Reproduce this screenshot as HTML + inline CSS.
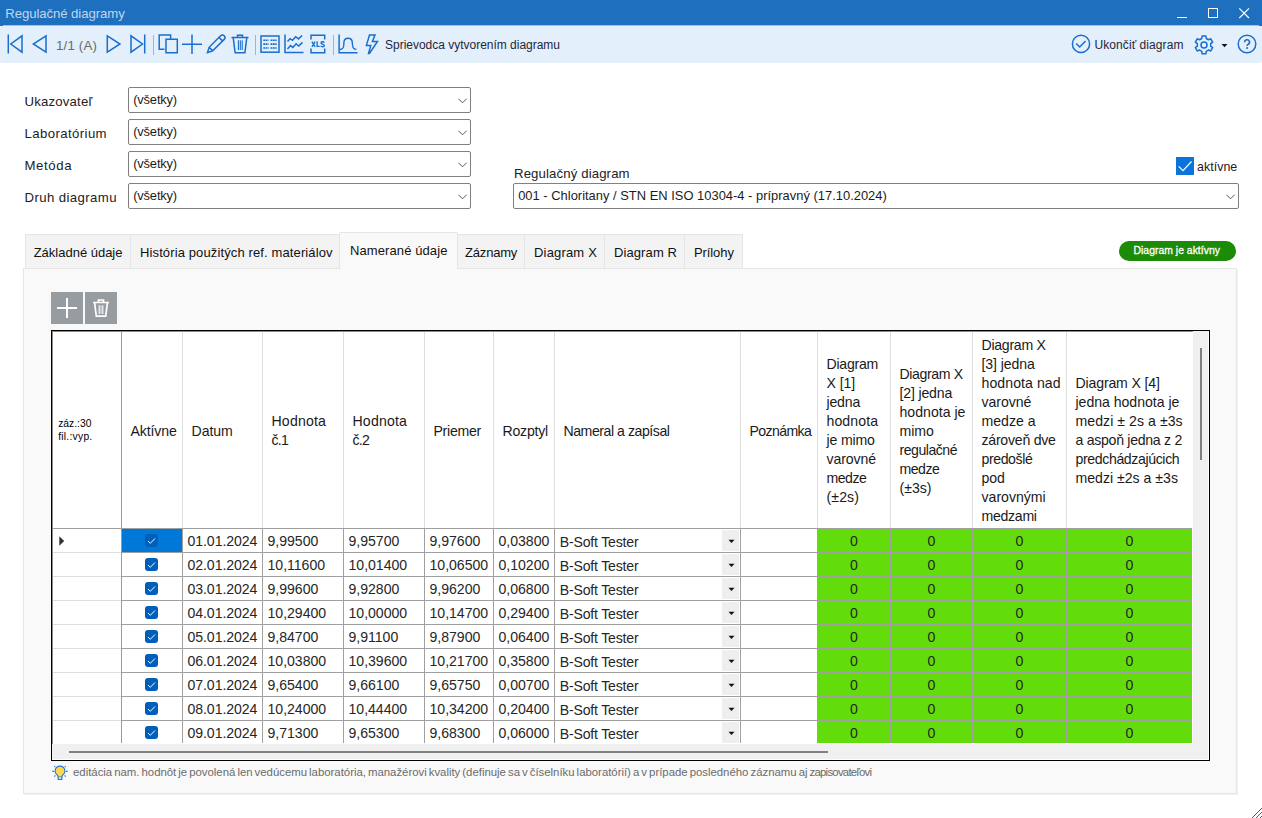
<!DOCTYPE html>
<html lang="sk">
<head>
<meta charset="utf-8">
<title>Regulačné diagramy</title>
<style>
*{box-sizing:border-box;margin:0;padding:0}
html,body{width:1262px;height:818px;overflow:hidden;background:#fff}
body{font-family:"Liberation Sans",sans-serif;color:#1a1a1a;position:relative}
.abs{position:absolute}
.t{position:absolute;white-space:nowrap;line-height:1}
svg{position:absolute;overflow:visible}
#title{left:0;top:0;width:1262px;height:26px;background:#1e6fbe}
#title .t{left:5.2px;top:6.5px;font-size:13.2px;color:#c0d5ec}
#toolbar{left:0;top:26px;width:1262px;height:37.3px;background:#e3f0fc;border-radius:0 0 2px 2px}
.sep{position:absolute;width:1px;top:35px;height:20px;background:#b3b1ae}
.tbt{font-size:12px;color:#26263a;top:38.5px}
.combo{position:absolute;height:26px;border:1px solid #808080;border-radius:2px;background:#fff}
.combo .t{left:4.2px;top:5.5px;font-size:12.9px;color:#1c1c1c}
.lbl{font-size:13.2px;color:#222}
.tab{position:absolute;top:234px;height:34px;background:#f3f3f3;border:1px solid #e5e5e5;border-bottom:none}
.tab .t{top:11px;font-size:13px;color:#111}
.tab.sel{top:232px;height:37px;background:#f9f9f9;z-index:3;border-radius:2px 2px 0 0}
#panel{left:23px;top:268px;width:1214px;height:526px;background:#f9f9f9;border:1px solid #e6e6e6;box-shadow:1px 1px 0 #f2f2f2}
.gbtn{position:absolute;top:292px;width:32px;height:32px;background:#969ca0}
#grid{left:51px;top:330px;width:1159px;height:431px;background:#f0f0f0;border:1px solid #000}
#gin{left:0;top:0;width:1141px;height:413px;background:#fff;overflow:hidden;border-left:1px solid #8c8c8c;border-top:1px solid #8c8c8c}
.vl{position:absolute;width:1px;background:#a0a0a0}
.hl{position:absolute;height:1px;background:#a0a0a0}
.hd{position:absolute;font-size:14.1px;line-height:19px;color:#1a1a1a;white-space:nowrap}
.c{position:absolute;font-size:14.1px;line-height:1;color:#262626;white-space:nowrap}
.g{position:absolute;background:#62dc0a}
.cb{position:absolute;width:13px;height:13px;border-radius:3px;background:#005fb8}
.dd{position:absolute;width:17px;height:21px;background:#eeeeee}
</style>
</head>
<body>
<div id="title" class="abs"><span class="t" id="t_title" style="letter-spacing:-0.082px;">Regulačné diagramy</span>
<svg style="left:1170px;top:0" width="92" height="25" viewBox="1170 0 92 25" fill="none" stroke="#fff" stroke-width="1"><path d="M1177 17.5H1187"/><rect x="1208.5" y="8.5" width="9" height="9"/><path d="M1239.300 8.300l9.700 9.700M1249 8.300l-9.700 9.700" stroke-width="1.150"/></svg>
</div>
<div id="toolbar" class="abs"></div><div class="abs" style="left:3px;top:25px;width:1256px;height:1px;background:#bcbbbd"></div>
<svg style="left:0;top:25px" width="1262" height="39" viewBox="0 25 1262 39" fill="none" stroke="#196ecf" stroke-width="1.5" stroke-linejoin="miter">
<path d="M8.3 34.5V53.5M22 35.8V52.2L10.8 44Z"/>
<path d="M46 35.8V52.2L33.3 44Z"/>
<path d="M107.3 35.8V52.2L120 44Z"/>
<path d="M131 35.8V52.2L142.5 44ZM144.7 34.5V53.5"/>
<path d="M164.500 49.300H159.200V35H170.600V38.500M166 39.2H177.3V52.8H166Z"/>
<path d="M182 44.2H202M192 34.5V54"/>
<path d="M207.5 52.5l1.6-5.2L220.6 35.8a2.3 2.3 0 0 1 3.6 3.6L212.7 50.9ZM209.1 47.3l3.6 3.6M219 37.4l3.6 3.6"/>
<path d="M231.5 37.6H248.5M237.5 37.6V35.2H242.5V37.6M233.2 37.6l1.9 15.2H244.9l1.9-15.2"/><path d="M238.400 40.300V49.900M240.300 40.300V49.900M242.200 40.300V49.900" stroke-width="1.100"/>
<rect x="261" y="36" width="18" height="16.2"/>
<path d="M263.300 40.200h5.200M270.500 40.200h6.200M263.300 44.100h5.200M270.500 44.100h6.200M263.300 48h5.200M270.500 48h6.200" stroke-width="1.600" stroke-dasharray="1.9 0.450"/>
<path d="M285 34.5V52.5H303.5"/><path d="M287.5 41.5l2.6-2.8 2.4 1.6 3.2-3.6 2.8 2.2 3.6-3.4M287.500 49l3-3.400 2.400 1.800 3.200-3.600 2.600 2.200 3.800-3.600"/>
<path d="M311 39.5V35.2H324.700V39.5M311 48.5V52.800H324.700V48.5"/>
<path d="M311.900 41.700L315.100 46.900M315.100 41.700L311.900 46.900M317.100 41.300V46.400H319.700M324.200 42.700C323.600 41.500 321 41.400 321 42.900C321 44.400 324.300 43.900 324.300 45.600C324.300 47.200 321.400 47.100 320.700 45.800" stroke-width="1.350"/>
<path d="M339.100 34.400V52.800H357.500"/><path d="M339.800 49.500C342.500 49.500 343.600 48 343.800 45L343.900 42.500C344 39.800 345.600 38.300 348.100 38.300C350.600 38.300 352.200 39.800 352.300 42.500L352.500 45C352.700 48 354 49.400 356.400 49.400" stroke-width="1.400"/>
<path d="M369.500 35.100H375L372.400 41.500H377.500L369.400 53.500H368.500L370.800 45.400H366.400Z"/>
<circle cx="1081" cy="43.900" r="8.600"/><path d="M1076.200 43.500l3.500 3.500 5.900-6"/>
<path d="M1202.11 36.00L1205.89 36.00L1206.24 38.48L1208.44 39.75L1210.76 38.81L1212.65 42.09L1210.68 43.63L1210.68 46.17L1212.65 47.71L1210.76 50.99L1208.44 50.05L1206.24 51.32L1205.89 53.80L1202.11 53.80L1201.76 51.32L1199.56 50.05L1197.24 50.99L1195.35 47.71L1197.32 46.17L1197.32 43.63L1195.35 42.09L1197.24 38.81L1199.56 39.75L1201.76 38.48Z" stroke-linejoin="round"/><circle cx="1204" cy="44.900" r="3"/>
<circle cx="1247" cy="44" r="8.8"/>
<path d="M1244.700 42.200a2.400 2.400 0 1 1 3.600 2c-.900.600-1.200 1-1.200 1.900" stroke-width="1.600"/><circle cx="1247.100" cy="48.100" r="1" fill="#196ecf" stroke="none"/>
</svg>
<svg style="left:1221px;top:43px" width="8" height="5"><path d="M0.500 1H6.500L3.500 4.200Z" fill="#111"/></svg>
<div class="sep" style="left:153px"></div>
<div class="sep" style="left:255px"></div>
<div class="sep" style="left:333px"></div>
<span class="t" id="t_nav" style="letter-spacing:0.156px;left:56px;top:38.7px;font-size:13.3px;color:#6a6a6a">1/1 (A)</span>
<span class="t tbt" id="t_spr" style="letter-spacing:-0.014px;left:385px">Sprievodca vytvorením diagramu</span>
<span class="t tbt" id="t_uk" style="letter-spacing:0.075px;left:1094.5px">Ukončiť diagram</span>
<span class="t lbl" id="l0" style="letter-spacing:0.184px;left:24.5px;top:95px">Ukazovateľ</span>
<div class="combo" style="left:128px;top:87px;width:343px"><span class="t" id="cv0" style="letter-spacing:-0.166px;">(všetky)</span><svg style="right:3.5px;top:10px" width="9" height="6" fill="none" stroke="#555" stroke-width="1"><path d="M0.500 0.800l4 4 4-4"/></svg></div>
<span class="t lbl" id="l1" style="letter-spacing:0.400px;left:24.5px;top:127px">Laboratórium</span>
<div class="combo" style="left:128px;top:119px;width:343px"><span class="t" id="cv1" style="letter-spacing:-0.166px;">(všetky)</span><svg style="right:3.5px;top:10px" width="9" height="6" fill="none" stroke="#555" stroke-width="1"><path d="M0.500 0.800l4 4 4-4"/></svg></div>
<span class="t lbl" id="l2" style="letter-spacing:0.600px;left:24.5px;top:159px">Metóda</span>
<div class="combo" style="left:128px;top:151px;width:343px"><span class="t" id="cv2" style="letter-spacing:-0.166px;">(všetky)</span><svg style="right:3.5px;top:10px" width="9" height="6" fill="none" stroke="#555" stroke-width="1"><path d="M0.500 0.800l4 4 4-4"/></svg></div>
<span class="t lbl" id="l3" style="letter-spacing:0.397px;left:24.5px;top:191px">Druh diagramu</span>
<div class="combo" style="left:128px;top:183px;width:343px"><span class="t" id="cv3" style="letter-spacing:-0.166px;">(všetky)</span><svg style="right:3.5px;top:10px" width="9" height="6" fill="none" stroke="#555" stroke-width="1"><path d="M0.500 0.800l4 4 4-4"/></svg></div>
<span class="t lbl" id="l4" style="letter-spacing:0.122px;left:514px;top:167px">Regulačný diagram</span>
<div class="combo" style="left:513px;top:183px;width:726px"><span class="t" id="t_reg" style="letter-spacing:0.017px;">001 - Chloritany / STN EN ISO 10304-4 - prípravný (17.10.2024)</span><svg style="right:3.5px;top:10px" width="9" height="6" fill="none" stroke="#555" stroke-width="1"><path d="M0.500 0.800l4 4 4-4"/></svg></div>
<div class="abs" style="left:1176px;top:157px;width:18px;height:18px;background:#0a74da"></div>
<svg style="left:1176px;top:157px" width="18" height="18" fill="none" stroke="#fff" stroke-width="1.200"><path d="M2.700 9.400l4.300 4.200 8.500-9.100"/></svg>
<span class="t" id="t_akt" style="letter-spacing:0.050px;left:1197px;top:160.500px;font-size:12.4px;color:#1a1a2a">aktívne</span>
<div class="abs" style="left:1119px;top:241px;width:117px;height:20px;border-radius:10px;background:#1c8b07"></div>
<span class="t" id="t_pill" style="letter-spacing:0.020px;left:1133.500px;top:245.800px;font-size:10.4px;color:#fff;-webkit-text-stroke:0.3px #fff">Diagram je aktívny</span>
<div id="panel" class="abs"></div>
<div class="tab" style="left:25px;width:106px"><span class="t" id="tb0" style="letter-spacing:-0.008px;left:7.7px">Základné údaje</span></div>
<div class="tab" style="left:130px;width:211px"><span class="t" id="tb1" style="letter-spacing:0.121px;left:9px">História použitých ref. materiálov</span></div>
<div class="tab sel" style="left:339px;width:119px"><span class="t" id="tb2" style="letter-spacing:0.098px;left:10px">Namerané údaje</span></div>
<div class="tab" style="left:457px;width:68px"><span class="t" id="tb3" style="letter-spacing:-0.181px;left:7.0px">Záznamy</span></div>
<div class="tab" style="left:524px;width:81px"><span class="t" id="tb4" style="letter-spacing:0.175px;left:9px">Diagram X</span></div>
<div class="tab" style="left:604px;width:81px"><span class="t" id="tb5" style="letter-spacing:0.097px;left:9px">Diagram R</span></div>
<div class="tab" style="left:684px;width:59px"><span class="t" id="tb6" style="letter-spacing:-0.096px;left:9px">Prílohy</span></div>
<div class="gbtn" style="left:51px"></div><div class="gbtn" style="left:85px"></div>
<svg style="left:51px;top:292px" width="66" height="32" fill="none" stroke="#fff" stroke-width="1.500"><path d="M6 16H26M16 6V26" stroke-width="2"/><path d="M42 10.500H58M47.500 10.500V8H52.500V10.500M43.600 10.500l1.700 13.700H54.700l1.700-13.700" stroke-width="1.700"/><path d="M48.200 13.300V22M51.800 13.300V22" stroke-width="1.100"/><path d="M50 13.300V22" stroke-width="1.100" stroke-opacity="0.700"/></svg>
<div id="grid" class="abs">
<div class="abs" style="left:0;top:0;width:1157px;height:429px;background:#f0f0f0;border-right:1px solid #fff;border-bottom:1px solid #fff"></div>
<div id="gin" class="abs">
<div class="g" style="left:765px;top:197px;width:374px;height:214px"></div>
<div class="abs" style="left:69px;top:197px;width:60px;height:23px;background:#0078d7"></div>
<div class="vl" style="left:68px;top:0;height:411px;background:#9a9a9a"></div>
<div class="vl" style="left:129px;top:0;height:196px;background:#dedede"></div>
<div class="vl" style="left:129px;top:196px;height:215px"></div>
<div class="vl" style="left:209px;top:0;height:196px;background:#dedede"></div>
<div class="vl" style="left:209px;top:196px;height:215px"></div>
<div class="vl" style="left:290px;top:0;height:196px;background:#dedede"></div>
<div class="vl" style="left:290px;top:196px;height:215px"></div>
<div class="vl" style="left:371px;top:0;height:196px;background:#dedede"></div>
<div class="vl" style="left:371px;top:196px;height:215px"></div>
<div class="vl" style="left:440px;top:0;height:196px;background:#dedede"></div>
<div class="vl" style="left:440px;top:196px;height:215px"></div>
<div class="vl" style="left:501px;top:0;height:196px;background:#dedede"></div>
<div class="vl" style="left:501px;top:196px;height:215px"></div>
<div class="vl" style="left:687px;top:0;height:196px;background:#dedede"></div>
<div class="vl" style="left:687px;top:196px;height:215px"></div>
<div class="vl" style="left:764px;top:0;height:196px;background:#dedede"></div>
<div class="vl" style="left:764px;top:196px;height:215px"></div>
<div class="vl" style="left:837px;top:0;height:196px;background:#dedede"></div>
<div class="vl" style="left:837px;top:196px;height:215px"></div>
<div class="vl" style="left:919px;top:0;height:196px;background:#dedede"></div>
<div class="vl" style="left:919px;top:196px;height:215px"></div>
<div class="vl" style="left:1013px;top:0;height:196px;background:#dedede"></div>
<div class="vl" style="left:1013px;top:196px;height:215px"></div>
<div class="hl" style="left:68px;top:196px;width:1071px"></div>
<div class="hl" style="left:0;top:196px;width:68px;background:#a0a0a0"></div>
<div class="hl" style="left:68px;top:220px;width:1071px"></div>
<div class="hl" style="left:0;top:220px;width:68px;background:#dedede"></div>
<div class="hl" style="left:68px;top:244px;width:1071px"></div>
<div class="hl" style="left:0;top:244px;width:68px;background:#dedede"></div>
<div class="hl" style="left:68px;top:268px;width:1071px"></div>
<div class="hl" style="left:0;top:268px;width:68px;background:#dedede"></div>
<div class="hl" style="left:68px;top:292px;width:1071px"></div>
<div class="hl" style="left:0;top:292px;width:68px;background:#dedede"></div>
<div class="hl" style="left:68px;top:316px;width:1071px"></div>
<div class="hl" style="left:0;top:316px;width:68px;background:#dedede"></div>
<div class="hl" style="left:68px;top:340px;width:1071px"></div>
<div class="hl" style="left:0;top:340px;width:68px;background:#dedede"></div>
<div class="hl" style="left:68px;top:364px;width:1071px"></div>
<div class="hl" style="left:0;top:364px;width:68px;background:#dedede"></div>
<div class="hl" style="left:68px;top:388px;width:1071px"></div>
<div class="hl" style="left:0;top:388px;width:68px;background:#dedede"></div>
<div class="abs" id="h_zaz" style="left:5.200000000000003px;top:84.60000000000002px;font-size:10.3px;line-height:13.2px;color:#000;white-space:nowrap">záz.:30<br><span style="letter-spacing:0.25px">fil.:vyp.</span></div>
<div class="abs" style="left:68px;top:1px;width:61px;height:196px;display:flex;align-items:center;padding-left:9.5px"><div class="hd" id="h0" style="letter-spacing:-0.117px;position:static">Aktívne</div></div>
<div class="abs" style="left:129px;top:1px;width:80px;height:196px;display:flex;align-items:center;padding-left:9.5px"><div class="hd" id="h1" style="letter-spacing:-0.043px;position:static">Datum</div></div>
<div class="abs" style="left:209px;top:1px;width:81px;height:196px;display:flex;align-items:center;padding-left:9.5px"><div class="hd" id="h2" style="letter-spacing:0.186px;position:static">Hodnota<br><span style="letter-spacing:-0.7px">č.1</span></div></div>
<div class="abs" style="left:290px;top:1px;width:81px;height:196px;display:flex;align-items:center;padding-left:9.5px"><div class="hd" id="h3" style="letter-spacing:0.186px;position:static">Hodnota<br><span style="letter-spacing:-0.7px">č.2</span></div></div>
<div class="abs" style="left:371px;top:1px;width:69px;height:196px;display:flex;align-items:center;padding-left:9.5px"><div class="hd" id="h4" style="letter-spacing:-0.278px;position:static">Priemer</div></div>
<div class="abs" style="left:440px;top:1px;width:61px;height:196px;display:flex;align-items:center;padding-left:9.5px"><div class="hd" id="h5" style="letter-spacing:-0.229px;position:static">Rozptyl</div></div>
<div class="abs" style="left:501px;top:1px;width:186px;height:196px;display:flex;align-items:center;padding-left:9.5px"><div class="hd" id="h6" style="letter-spacing:-0.447px;position:static">Nameral a zapísal</div></div>
<div class="abs" style="left:687px;top:1px;width:77px;height:196px;display:flex;align-items:center;padding-left:9.5px"><div class="hd" id="h7" style="letter-spacing:-0.612px;position:static">Poznámka</div></div>
<div class="abs" style="left:764px;top:1px;width:73px;height:196px;display:flex;align-items:center;padding-left:9.5px"><div class="hd" id="h8" style="position:static"><span id="h8_0" style="letter-spacing:-0.237px;">Diagram</span><br><span id="h8_1" style="letter-spacing:-0.078px;">X [1]</span><br><span id="h8_2" style="letter-spacing:-0.178px;">jedna</span><br><span id="h8_3" style="letter-spacing:0.093px;">hodnota</span><br><span id="h8_4" style="letter-spacing:-0.149px;">je mimo</span><br><span id="h8_5" style="letter-spacing:-0.079px;">varovné</span><br><span id="h8_6" style="letter-spacing:-0.481px;">medze</span><br><span id="h8_7" style="letter-spacing:0.116px;">(±2s)</span></div></div>
<div class="abs" style="left:837px;top:1px;width:82px;height:196px;display:flex;align-items:center;padding-left:9.5px"><div class="hd" id="h9" style="position:static"><span id="h9_0" style="letter-spacing:-0.376px;">Diagram X</span><br><span id="h9_1" style="letter-spacing:-0.164px;">[2] jedna</span><br><span id="h9_2" style="letter-spacing:0.006px;">hodnota je</span><br><span id="h9_3" style="letter-spacing:-0.041px;">mimo</span><br><span id="h9_4" style="letter-spacing:-0.479px;">regulačné</span><br><span id="h9_5" style="letter-spacing:-0.481px;">medze</span><br><span id="h9_6" style="">(±3s)</span></div></div>
<div class="abs" style="left:919px;top:1px;width:94px;height:196px;display:flex;align-items:center;padding-left:9.5px"><div class="hd" id="h10" style="position:static"><span id="h10_0" style="letter-spacing:-0.264px;">Diagram X</span><br><span id="h10_1" style="letter-spacing:-0.098px;">[3] jedna</span><br><span id="h10_2" style="letter-spacing:0.074px;">hodnota nad</span><br><span id="h10_3" style="letter-spacing:-0.036px;">varovné</span><br><span id="h10_4" style="letter-spacing:0.020px;">medze a</span><br><span id="h10_5" style="letter-spacing:-0.235px;">zároveň dve</span><br><span id="h10_6" style="letter-spacing:-0.396px;">predošlé</span><br><span id="h10_7" style="letter-spacing:-0.072px;">pod</span><br><span id="h10_8" style="">varovnými</span><br><span id="h10_9" style="letter-spacing:-0.283px;">medzami</span></div></div>
<div class="abs" style="left:1013px;top:1px;width:126px;height:196px;display:flex;align-items:center;padding-left:9.5px"><div class="hd" id="h11" style="position:static"><span id="h11_0" style="letter-spacing:-0.151px;">Diagram X [4]</span><br><span id="h11_1" style="letter-spacing:-0.027px;">jedna hodnota je</span><br><span id="h11_2" style="letter-spacing:0.054px;">medzi ± 2s a ±3s</span><br><span id="h11_3" style="letter-spacing:-0.281px;">a aspoň jedna z 2</span><br><span id="h11_4" style="letter-spacing:-0.369px;">predchádzajúcich</span><br><span id="h11_5" style="letter-spacing:0.005px;">medzi ±2s a ±3s</span></div></div>
<div class="cb" style="left:92px;top:202px"><svg style="left:2.1px;top:2.7px" width="9" height="8" fill="none" stroke="#fff" stroke-width="1"><path d="M1 4l2.300 2.300L8 1.500"/></svg></div>
<span class="c" id="c0_0" style="letter-spacing:-0.075px;left:134.5px;top:201.79999999999995px">01.01.2024</span>
<span class="c" id="c0_1" style="letter-spacing:-0.022px;left:214.5px;top:201.79999999999995px">9,99500</span>
<span class="c" id="c0_2" style="letter-spacing:-0.022px;left:295.5px;top:201.79999999999995px">9,95700</span>
<span class="c" id="c0_3" style="letter-spacing:-0.022px;left:376.5px;top:201.79999999999995px">9,97600</span>
<span class="c" id="c0_4" style="letter-spacing:-0.022px;left:445.5px;top:201.79999999999995px">0,03800</span>
<span class="c" id="c0_5" style="letter-spacing:-0.201px;left:506.79999999999995px;top:202.70000000000005px">B-Soft Tester</span>
<div class="dd" style="left:669px;top:198px"></div>
<svg style="left:675px;top:207px" width="7" height="5"><path d="M0.500 0.800H6.500L3.500 4Z" fill="#111"/></svg>
<span class="c" style="left:765px;top:201.79999999999995px;width:72px;text-align:center">0</span>
<span class="c" style="left:838px;top:201.79999999999995px;width:81px;text-align:center">0</span>
<span class="c" style="left:920px;top:201.79999999999995px;width:93px;text-align:center">0</span>
<span class="c" style="left:1014px;top:201.79999999999995px;width:125px;text-align:center">0</span>
<div class="cb" style="left:92px;top:226px"><svg style="left:2.1px;top:2.7px" width="9" height="8" fill="none" stroke="#fff" stroke-width="1"><path d="M1 4l2.300 2.300L8 1.500"/></svg></div>
<span class="c" id="c1_0" style="letter-spacing:-0.075px;left:134.5px;top:225.79999999999995px">02.01.2024</span>
<span class="c" id="c1_1" style="letter-spacing:-0.022px;left:214.5px;top:225.79999999999995px">10,11600</span>
<span class="c" id="c1_2" style="letter-spacing:-0.022px;left:295.5px;top:225.79999999999995px">10,01400</span>
<span class="c" id="c1_3" style="letter-spacing:-0.022px;left:376.5px;top:225.79999999999995px">10,06500</span>
<span class="c" id="c1_4" style="letter-spacing:-0.022px;left:445.5px;top:225.79999999999995px">0,10200</span>
<span class="c" id="c1_5" style="letter-spacing:-0.201px;left:506.79999999999995px;top:226.70000000000005px">B-Soft Tester</span>
<div class="dd" style="left:669px;top:222px"></div>
<svg style="left:675px;top:231px" width="7" height="5"><path d="M0.500 0.800H6.500L3.500 4Z" fill="#111"/></svg>
<span class="c" style="left:765px;top:225.79999999999995px;width:72px;text-align:center">0</span>
<span class="c" style="left:838px;top:225.79999999999995px;width:81px;text-align:center">0</span>
<span class="c" style="left:920px;top:225.79999999999995px;width:93px;text-align:center">0</span>
<span class="c" style="left:1014px;top:225.79999999999995px;width:125px;text-align:center">0</span>
<div class="cb" style="left:92px;top:250px"><svg style="left:2.1px;top:2.7px" width="9" height="8" fill="none" stroke="#fff" stroke-width="1"><path d="M1 4l2.300 2.300L8 1.500"/></svg></div>
<span class="c" id="c2_0" style="letter-spacing:-0.075px;left:134.5px;top:249.79999999999995px">03.01.2024</span>
<span class="c" id="c2_1" style="letter-spacing:-0.022px;left:214.5px;top:249.79999999999995px">9,99600</span>
<span class="c" id="c2_2" style="letter-spacing:-0.022px;left:295.5px;top:249.79999999999995px">9,92800</span>
<span class="c" id="c2_3" style="letter-spacing:-0.022px;left:376.5px;top:249.79999999999995px">9,96200</span>
<span class="c" id="c2_4" style="letter-spacing:-0.022px;left:445.5px;top:249.79999999999995px">0,06800</span>
<span class="c" id="c2_5" style="letter-spacing:-0.201px;left:506.79999999999995px;top:250.70000000000005px">B-Soft Tester</span>
<div class="dd" style="left:669px;top:246px"></div>
<svg style="left:675px;top:255px" width="7" height="5"><path d="M0.500 0.800H6.500L3.500 4Z" fill="#111"/></svg>
<span class="c" style="left:765px;top:249.79999999999995px;width:72px;text-align:center">0</span>
<span class="c" style="left:838px;top:249.79999999999995px;width:81px;text-align:center">0</span>
<span class="c" style="left:920px;top:249.79999999999995px;width:93px;text-align:center">0</span>
<span class="c" style="left:1014px;top:249.79999999999995px;width:125px;text-align:center">0</span>
<div class="cb" style="left:92px;top:274px"><svg style="left:2.1px;top:2.7px" width="9" height="8" fill="none" stroke="#fff" stroke-width="1"><path d="M1 4l2.300 2.300L8 1.500"/></svg></div>
<span class="c" id="c3_0" style="letter-spacing:-0.075px;left:134.5px;top:273.79999999999995px">04.01.2024</span>
<span class="c" id="c3_1" style="letter-spacing:-0.022px;left:214.5px;top:273.79999999999995px">10,29400</span>
<span class="c" id="c3_2" style="letter-spacing:-0.022px;left:295.5px;top:273.79999999999995px">10,00000</span>
<span class="c" id="c3_3" style="letter-spacing:-0.022px;left:376.5px;top:273.79999999999995px">10,14700</span>
<span class="c" id="c3_4" style="letter-spacing:-0.022px;left:445.5px;top:273.79999999999995px">0,29400</span>
<span class="c" id="c3_5" style="letter-spacing:-0.201px;left:506.79999999999995px;top:274.70000000000005px">B-Soft Tester</span>
<div class="dd" style="left:669px;top:270px"></div>
<svg style="left:675px;top:279px" width="7" height="5"><path d="M0.500 0.800H6.500L3.500 4Z" fill="#111"/></svg>
<span class="c" style="left:765px;top:273.79999999999995px;width:72px;text-align:center">0</span>
<span class="c" style="left:838px;top:273.79999999999995px;width:81px;text-align:center">0</span>
<span class="c" style="left:920px;top:273.79999999999995px;width:93px;text-align:center">0</span>
<span class="c" style="left:1014px;top:273.79999999999995px;width:125px;text-align:center">0</span>
<div class="cb" style="left:92px;top:298px"><svg style="left:2.1px;top:2.7px" width="9" height="8" fill="none" stroke="#fff" stroke-width="1"><path d="M1 4l2.300 2.300L8 1.500"/></svg></div>
<span class="c" id="c4_0" style="letter-spacing:-0.075px;left:134.5px;top:297.79999999999995px">05.01.2024</span>
<span class="c" id="c4_1" style="letter-spacing:-0.022px;left:214.5px;top:297.79999999999995px">9,84700</span>
<span class="c" id="c4_2" style="letter-spacing:-0.022px;left:295.5px;top:297.79999999999995px">9,91100</span>
<span class="c" id="c4_3" style="letter-spacing:-0.022px;left:376.5px;top:297.79999999999995px">9,87900</span>
<span class="c" id="c4_4" style="letter-spacing:-0.022px;left:445.5px;top:297.79999999999995px">0,06400</span>
<span class="c" id="c4_5" style="letter-spacing:-0.201px;left:506.79999999999995px;top:298.70000000000005px">B-Soft Tester</span>
<div class="dd" style="left:669px;top:294px"></div>
<svg style="left:675px;top:303px" width="7" height="5"><path d="M0.500 0.800H6.500L3.500 4Z" fill="#111"/></svg>
<span class="c" style="left:765px;top:297.79999999999995px;width:72px;text-align:center">0</span>
<span class="c" style="left:838px;top:297.79999999999995px;width:81px;text-align:center">0</span>
<span class="c" style="left:920px;top:297.79999999999995px;width:93px;text-align:center">0</span>
<span class="c" style="left:1014px;top:297.79999999999995px;width:125px;text-align:center">0</span>
<div class="cb" style="left:92px;top:322px"><svg style="left:2.1px;top:2.7px" width="9" height="8" fill="none" stroke="#fff" stroke-width="1"><path d="M1 4l2.300 2.300L8 1.500"/></svg></div>
<span class="c" id="c5_0" style="letter-spacing:-0.075px;left:134.5px;top:321.79999999999995px">06.01.2024</span>
<span class="c" id="c5_1" style="letter-spacing:-0.022px;left:214.5px;top:321.79999999999995px">10,03800</span>
<span class="c" id="c5_2" style="letter-spacing:-0.022px;left:295.5px;top:321.79999999999995px">10,39600</span>
<span class="c" id="c5_3" style="letter-spacing:-0.022px;left:376.5px;top:321.79999999999995px">10,21700</span>
<span class="c" id="c5_4" style="letter-spacing:-0.022px;left:445.5px;top:321.79999999999995px">0,35800</span>
<span class="c" id="c5_5" style="letter-spacing:-0.201px;left:506.79999999999995px;top:322.70000000000005px">B-Soft Tester</span>
<div class="dd" style="left:669px;top:318px"></div>
<svg style="left:675px;top:327px" width="7" height="5"><path d="M0.500 0.800H6.500L3.500 4Z" fill="#111"/></svg>
<span class="c" style="left:765px;top:321.79999999999995px;width:72px;text-align:center">0</span>
<span class="c" style="left:838px;top:321.79999999999995px;width:81px;text-align:center">0</span>
<span class="c" style="left:920px;top:321.79999999999995px;width:93px;text-align:center">0</span>
<span class="c" style="left:1014px;top:321.79999999999995px;width:125px;text-align:center">0</span>
<div class="cb" style="left:92px;top:346px"><svg style="left:2.1px;top:2.7px" width="9" height="8" fill="none" stroke="#fff" stroke-width="1"><path d="M1 4l2.300 2.300L8 1.500"/></svg></div>
<span class="c" id="c6_0" style="letter-spacing:-0.075px;left:134.5px;top:345.79999999999995px">07.01.2024</span>
<span class="c" id="c6_1" style="letter-spacing:-0.022px;left:214.5px;top:345.79999999999995px">9,65400</span>
<span class="c" id="c6_2" style="letter-spacing:-0.022px;left:295.5px;top:345.79999999999995px">9,66100</span>
<span class="c" id="c6_3" style="letter-spacing:-0.022px;left:376.5px;top:345.79999999999995px">9,65750</span>
<span class="c" id="c6_4" style="letter-spacing:-0.022px;left:445.5px;top:345.79999999999995px">0,00700</span>
<span class="c" id="c6_5" style="letter-spacing:-0.201px;left:506.79999999999995px;top:346.70000000000005px">B-Soft Tester</span>
<div class="dd" style="left:669px;top:342px"></div>
<svg style="left:675px;top:351px" width="7" height="5"><path d="M0.500 0.800H6.500L3.500 4Z" fill="#111"/></svg>
<span class="c" style="left:765px;top:345.79999999999995px;width:72px;text-align:center">0</span>
<span class="c" style="left:838px;top:345.79999999999995px;width:81px;text-align:center">0</span>
<span class="c" style="left:920px;top:345.79999999999995px;width:93px;text-align:center">0</span>
<span class="c" style="left:1014px;top:345.79999999999995px;width:125px;text-align:center">0</span>
<div class="cb" style="left:92px;top:370px"><svg style="left:2.1px;top:2.7px" width="9" height="8" fill="none" stroke="#fff" stroke-width="1"><path d="M1 4l2.300 2.300L8 1.500"/></svg></div>
<span class="c" id="c7_0" style="letter-spacing:-0.075px;left:134.5px;top:369.79999999999995px">08.01.2024</span>
<span class="c" id="c7_1" style="letter-spacing:-0.022px;left:214.5px;top:369.79999999999995px">10,24000</span>
<span class="c" id="c7_2" style="letter-spacing:-0.022px;left:295.5px;top:369.79999999999995px">10,44400</span>
<span class="c" id="c7_3" style="letter-spacing:-0.022px;left:376.5px;top:369.79999999999995px">10,34200</span>
<span class="c" id="c7_4" style="letter-spacing:-0.022px;left:445.5px;top:369.79999999999995px">0,20400</span>
<span class="c" id="c7_5" style="letter-spacing:-0.201px;left:506.79999999999995px;top:370.70000000000005px">B-Soft Tester</span>
<div class="dd" style="left:669px;top:366px"></div>
<svg style="left:675px;top:375px" width="7" height="5"><path d="M0.500 0.800H6.500L3.500 4Z" fill="#111"/></svg>
<span class="c" style="left:765px;top:369.79999999999995px;width:72px;text-align:center">0</span>
<span class="c" style="left:838px;top:369.79999999999995px;width:81px;text-align:center">0</span>
<span class="c" style="left:920px;top:369.79999999999995px;width:93px;text-align:center">0</span>
<span class="c" style="left:1014px;top:369.79999999999995px;width:125px;text-align:center">0</span>
<div class="cb" style="left:92px;top:394px"><svg style="left:2.1px;top:2.7px" width="9" height="8" fill="none" stroke="#fff" stroke-width="1"><path d="M1 4l2.300 2.300L8 1.500"/></svg></div>
<span class="c" id="c8_0" style="letter-spacing:-0.075px;left:134.5px;top:393.79999999999995px">09.01.2024</span>
<span class="c" id="c8_1" style="letter-spacing:-0.022px;left:214.5px;top:393.79999999999995px">9,71300</span>
<span class="c" id="c8_2" style="letter-spacing:-0.022px;left:295.5px;top:393.79999999999995px">9,65300</span>
<span class="c" id="c8_3" style="letter-spacing:-0.022px;left:376.5px;top:393.79999999999995px">9,68300</span>
<span class="c" id="c8_4" style="letter-spacing:-0.022px;left:445.5px;top:393.79999999999995px">0,06000</span>
<span class="c" id="c8_5" style="letter-spacing:-0.201px;left:506.79999999999995px;top:394.70000000000005px">B-Soft Tester</span>
<div class="dd" style="left:669px;top:390px"></div>
<svg style="left:675px;top:399px" width="7" height="5"><path d="M0.500 0.800H6.500L3.500 4Z" fill="#111"/></svg>
<span class="c" style="left:765px;top:393.79999999999995px;width:72px;text-align:center">0</span>
<span class="c" style="left:838px;top:393.79999999999995px;width:81px;text-align:center">0</span>
<span class="c" style="left:920px;top:393.79999999999995px;width:93px;text-align:center">0</span>
<span class="c" style="left:1014px;top:393.79999999999995px;width:125px;text-align:center">0</span>
<svg style="left:6px;top:204px" width="6" height="10"><path d="M0.300 0.300V9.700L5.200 5Z" fill="#333"/></svg>
</div>
<div class="abs" style="left:1148px;top:17px;width:2px;height:112px;background:#808080"></div>
<div class="abs" style="left:17px;top:420px;width:759px;height:2px;background:#808080"></div>
</div>
<svg style="left:52px;top:764.8px" width="16" height="16" viewBox="0 0 16 16" fill="none"><path d="M8 1.100a4.800 4.800 0 0 0-3.100 8.500c.800.700 1.200 1.500 1.200 2.500h3.800c0-1 .400-1.800 1.200-2.500A4.800 4.800 0 0 0 8 1.100Z" fill="#ffd84d" stroke="#2576d2" stroke-width="1.100"/><path d="M6.200 12.300V14.500H9.800V12.300" fill="#d6e6f7" stroke="#2576d2" stroke-width="1.200"/><path d="M0.300 6.400H2.200M13.800 6.400H15.700M2.200 1.200l1.200 1M13.800 1.200l-1.200 1M2.300 11.500l1.200-1M13.700 11.500l-1.200-1" stroke="#2f7fd8" stroke-width="1.100"/></svg>
<span class="t" id="t_hint" style="letter-spacing:-0.014px;left:73px;top:766.6px;font-size:11.4px;color:#6b6b6b;word-spacing:-1.1px">editácia nam. hodnôt je povolená len vedúcemu laboratória, manažérovi kvality (definuje sa v číselníku laboratórií) a v prípade posledného záznamu aj</span>
<span class="t" id="t_hint2" style="letter-spacing:-0.753px;left:809.5px;top:766.6px;font-size:11.4px;color:#6b6b6b">zapisovateľovi</span>
<svg style="left:1248px;top:804px" width="14" height="14" fill="#585864" shape-rendering="crispEdges"><rect x="4" y="13" width="1" height="1"/><rect x="5" y="12" width="1" height="1"/><rect x="6" y="11" width="1" height="1"/><rect x="7" y="10" width="1" height="1"/><rect x="8" y="9" width="1" height="1"/><rect x="9" y="8" width="1" height="1"/><rect x="10" y="7" width="1" height="1"/><rect x="11" y="6" width="1" height="1"/><rect x="12" y="5" width="1" height="1"/><rect x="13" y="4" width="1" height="1"/><rect x="8" y="13" width="1" height="1"/><rect x="9" y="12" width="1" height="1"/><rect x="10" y="11" width="1" height="1"/><rect x="11" y="10" width="1" height="1"/><rect x="12" y="9" width="1" height="1"/><rect x="13" y="8" width="1" height="1"/><rect x="12" y="13" width="1" height="1"/><rect x="13" y="12" width="1" height="1"/></svg>
</body>
</html>
